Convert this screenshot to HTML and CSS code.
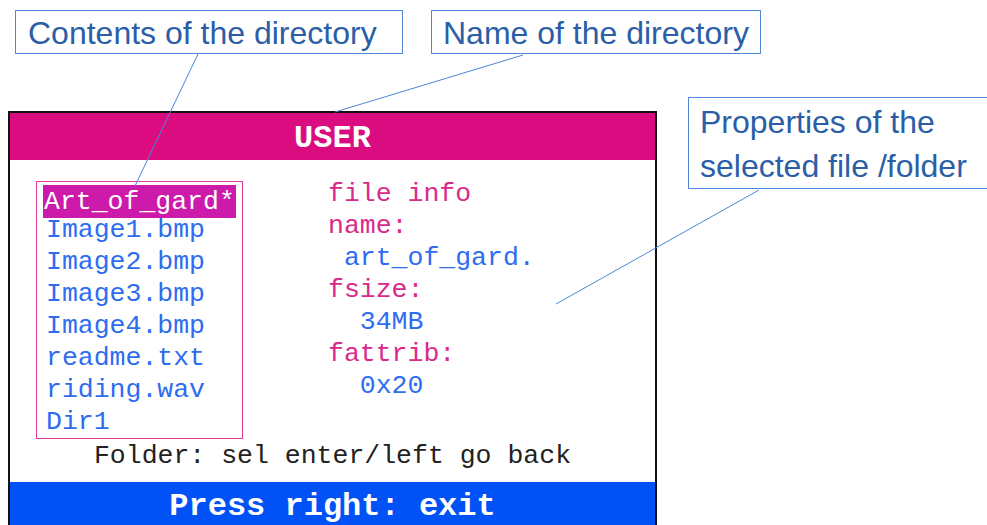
FILE: index.html
```html
<!DOCTYPE html>
<html>
<head>
    <title>File Browser - USER</title>
    <link rel="stylesheet" href="styles.css">
</head>
<body>
    <div class="panel">
        <div class="panel-title">USER</div>
        <div class="panel-body">
            <div class="columns">
                <ul class="file-list">
                    <li class="selected">Art_of_gard*</li>
                    <li>Image1.bmp</li>
                    <li>Image2.bmp</li>
                    <li>Image3.bmp</li>
                    <li>Image4.bmp</li>
                    <li>readme.txt</li>
                    <li>riding.wav</li>
                    <li>Dir1</li>
                </ul>
                <div class="file-info">
                    <div class="label">file info</div>
                    <div class="label">name:</div>
                    <div class="value"> art_of_gard.</div>
                    <div class="label">fsize:</div>
                    <div class="value">  34MB</div>
                    <div class="label">fattrib:</div>
                    <div class="value">  0x20</div>
                </div>
            </div>
            <div class="hint">Folder: sel enter/left go back</div>
        </div>
        <div class="panel-footer">Press right: exit</div>
    </div>

    <!-- annotations -->
    <div class="callout callout-contents">Contents of the directory</div>
    <div class="callout callout-name">Name of the directory</div>
    <div class="callout callout-props">Properties of the<br>selected file /folder</div>
    <svg class="leaders" width="987" height="525" viewBox="0 0 987 525">
        <line x1="198" y1="54" x2="135" y2="186"></line>
        <line x1="523" y1="55" x2="335" y2="112"></line>
        <line x1="759" y1="190" x2="556" y2="304"></line>
    </svg>
</body>
</html>
```

FILE: styles.css
```css
html, body {
    margin: 0;
    height: 525px;
    overflow: hidden;
}
body {
    position: relative;
    background-color: #fff;
    font-family: "Liberation Mono", "Courier New", monospace;
}
.panel {
    width: 645px;
    margin: 111px 0 0 8px;
    border: 2px solid #111;
    border-bottom: none;
    background-color: #fff;
}
.panel-title {
    height: 43px;
    padding-top: 4px;
    line-height: 43px;
    background-color: #da0c80;
    color: #fff;
    font-size: 32px;
    font-weight: bold;
    text-align: center;
}
.panel-body {
    padding: 21px 0 10px 26px;
    font-size: 26.5px;
}
.columns {
    display: flex;
    align-items: flex-start;
    gap: 85px;
}
.file-list {
    list-style: none;
    margin: 0;
    padding: 3px 6px 0 6px;
    width: 193px;
    border: 1px solid #e23d98;
    line-height: 32px;
    color: #2e6cf0;
}
.file-list li {
    padding-left: 3px;
    white-space: pre;
}
.file-list li.selected {
    height: 33px;
    line-height: 34px;
    margin-bottom: -4px;
    padding-left: 1px;
    background-color: #cc1aaa;
    color: #fff;
}
.file-info {
    margin-top: -3px;
    line-height: 32px;
}
.file-info .label {
    color: #d92a8a;
}
.file-info .value {
    color: #2e6cf0;
    white-space: pre;
}
.hint {
    margin: 1px 0 0 -26px;
    line-height: 32px;
    color: #222;
    text-align: center;
}
.panel-footer {
    height: 44px;
    padding-top: 3px;
    line-height: 44px;
    background-color: #0052f7;
    color: #fff;
    font-size: 32px;
    font-weight: bold;
    text-align: center;
}
.callout {
    position: absolute;
    border: 1px solid #4f88d9;
    background-color: #fff;
    color: #2b5ea7;
    font-family: "Liberation Sans", Arial, sans-serif;
    font-size: 32px;
    white-space: nowrap;
}
.callout-contents {
    left: 15px;
    top: 10px;
    width: 374px;
    height: 42px;
    line-height: 44px;
    padding-left: 12px;
}
.callout-name {
    left: 431px;
    top: 10px;
    width: 317px;
    height: 42px;
    line-height: 44px;
    padding-left: 11px;
}
.callout-props {
    left: 688px;
    top: 97px;
    width: 320px;
    height: 88px;
    padding-top: 2px;
    line-height: 44px;
    padding-left: 11px;
}
.leaders {
    position: absolute;
    left: 0;
    top: 0;
    pointer-events: none;
}
.leaders line {
    stroke: #4a86d8;
    stroke-width: 1;
}
```
